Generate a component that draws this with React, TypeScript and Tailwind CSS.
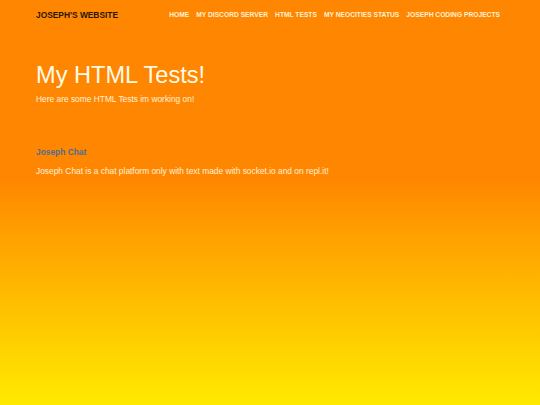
const navLinks = [
  "Home",
  "My Discord Server",
  "HTML Tests",
  "My Neocities Status",
  "Joseph Coding Projects",
];

export default function App() {
  return (
    <div
      className="min-h-[405px] w-full bg-linear-to-b from-[#ff8600] from-[44%] to-[#ffea00] text-[#fff8e6]"
      style={{ fontFamily: '"Liberation Sans", Arial, sans-serif' }}
    >
      <header className="flex h-[30px] items-center justify-between px-[36px]">
        <a className="text-[8.4px] font-bold uppercase text-[#2b1700]">Joseph's Website</a>
        <nav className="mr-[4px] flex gap-[7px]">
          {navLinks.map((l) => (
            <a key={l} className="text-[6.7px] font-bold uppercase text-[#fff1d6]">
              {l}
            </a>
          ))}
        </nav>
      </header>

      <main className="px-[36px]">
        <h1 className="mt-[31px] text-[23.6px] leading-[28px] text-[#fffbe8]">My HTML Tests!</h1>
        <p className="mt-[4px] text-[8.4px] leading-[12px] text-[#fff2dc]">
          Here are some HTML Tests im working on!
        </p>

        <section className="mt-[41px]">
          <h3 className="text-[8.4px] font-bold leading-[12px] text-[#4d6e96]">Joseph Chat</h3>
          <p className="mt-[7px] text-[8.4px] leading-[12px] text-[#fff0d8]">
            Joseph Chat is a chat platform only with text made with socket.io and on repl.it!
          </p>
        </section>
      </main>
    </div>
  );
}
